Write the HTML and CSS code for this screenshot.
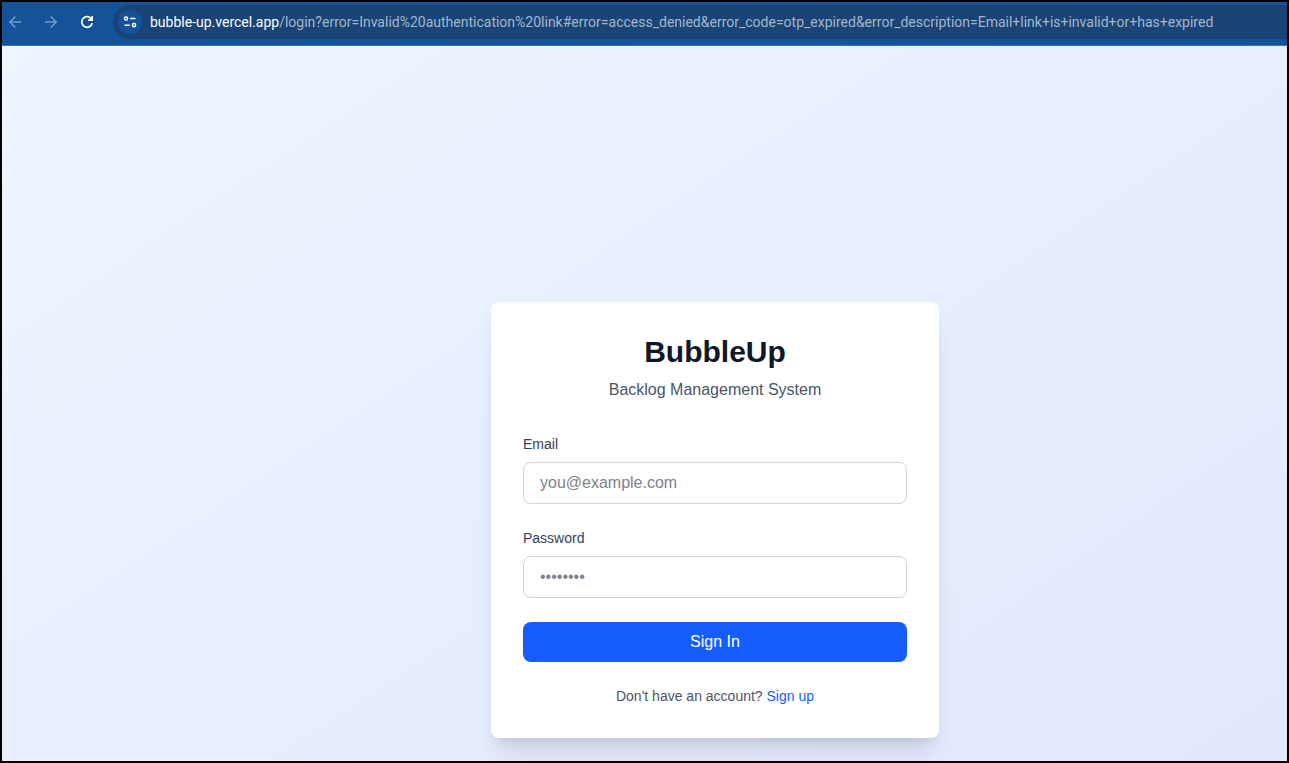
FILE: index.html
```html
<!DOCTYPE html>
<html lang="en">
<head>
<meta charset="utf-8">
<meta name="viewport" content="width=device-width, initial-scale=1">
<title>BubbleUp</title>
<link rel="stylesheet" href="styles.css">
</head>
<body class="window">
<header class="toolbar">
  <nav class="toolbar-nav" aria-label="Browser navigation">
    <button class="nav-button nav-button-muted" type="button" aria-label="Back">
      <svg width="14" height="14" viewBox="0 0 14 14" fill="none" stroke="currentColor" stroke-width="1.5"><path d="M13 7H2M7.3 1.5L1.8 7l5.5 5.5"/></svg>
    </button>
    <button class="nav-button nav-button-muted" type="button" aria-label="Forward">
      <svg width="14" height="14" viewBox="0 0 14 14" fill="none" stroke="currentColor" stroke-width="1.5"><path d="M1 7h11M6.700 1.500L12.200 7l-5.500 5.500"/></svg>
    </button>
    <button class="nav-button" type="button" aria-label="Reload">
      <svg width="14" height="14" viewBox="0 0 14 14" fill="none" stroke="currentColor" stroke-width="1.700"><path d="M12.200 8.300A5.300 5.300 0 1 1 10.900 3.300L12 4.500"/><path d="M12.200 1v4.200H8"/></svg>
    </button>
  </nav>
  <div class="address">
    <button class="site-info" type="button" aria-label="View site information">
      <svg width="14" height="14" viewBox="0 0 14 14" fill="none" stroke="currentColor" stroke-width="1.500"><circle cx="3" cy="3.500" r="1.600"/><path d="M7.200 3.500H12.500M1.500 10.200H6.800"/><circle cx="11" cy="10.200" r="1.600"/></svg>
    </button>
    <span class="url"><span class="url-host">bubble-up.vercel.app</span>/login?error=Invalid%20authentication%20link#error=access_denied&amp;error_code=otp_expired&amp;error_description=Email+link+is+invalid+or+has+expired</span>
  </div>
</header>
<main class="page">
  <section class="card">
    <header class="card-header">
      <h1 class="title">BubbleUp</h1>
      <p class="subtitle">Backlog Management System</p>
    </header>
    <form class="form">
      <div class="field">
        <label class="label" for="email">Email</label>
        <input class="input" id="email" type="email" placeholder="you@example.com">
      </div>
      <div class="field">
        <label class="label" for="password">Password</label>
        <input class="input" id="password" type="password" placeholder="••••••••">
      </div>
      <button class="submit" type="submit">Sign In</button>
    </form>
    <p class="signup">Don't have an account? <a class="link" href="#signup">Sign up</a></p>
  </section>
</main>
</body>
</html>
```
FILE: styles.css
```css
* {
  box-sizing: border-box;
  margin: 0;
}

.window {
  display: flex;
  flex-direction: column;
  height: 100vh;
  overflow: hidden;
  border: 2px solid #000;
  font: 16px/24px "Liberation Sans", Arial, sans-serif;
}

.toolbar {
  display: flex;
  flex: none;
  align-items: center;
  gap: 15px;
  height: 44px;
  padding-bottom: 3px;
  border-bottom: 1px solid #3e76b5;
  background: #14539a;
}

.toolbar-nav {
  display: flex;
  gap: 14px;
  padding-left: 2px;
}

.nav-button {
  display: grid;
  place-items: center;
  width: 22px;
  height: 22px;
  padding: 0;
  border: 0;
  background: none;
  color: #fff;
}

.nav-button-muted {
  color: #6f9ac8;
}

.address {
  display: flex;
  flex: 1;
  align-items: center;
  gap: 8px;
  min-width: 0;
  height: 34px;
  padding-left: 5px;
  border-radius: 17px 0 0 17px;
  background: #194475;
}

.site-info {
  display: grid;
  flex: none;
  place-items: center;
  width: 24px;
  height: 24px;
  padding: 0;
  border: 0;
  border-radius: 50%;
  background: #14539a;
  color: #fff;
}

.url {
  overflow: hidden;
  color: #a3b6cc;
  font: 14px/20px Roboto, "Noto Sans", sans-serif;
  white-space: nowrap;
}

.url-host {
  color: #fff;
}

.page {
  display: flex;
  flex: 1;
  align-items: flex-start;
  justify-content: center;
  min-height: 0;
  padding: 256px 0 0 141px;
  background: linear-gradient(to bottom right, #edf5ff, #dfe6fd) 0 0 / 1426px 948px;
}

.card {
  width: 100%;
  max-width: 448px;
  padding: 32px;
  border-radius: 8px;
  background: #fff;
  box-shadow: 0 20px 25px -5px rgb(0 0 0 / 10%), 0 8px 10px -6px rgb(0 0 0 / 10%);
}

.card-header {
  margin-bottom: 32px;
  text-align: center;
}

.title {
  margin-bottom: 8px;
  color: #101828;
  font-size: 30px;
  line-height: 36px;
}

.subtitle {
  color: #4a5565;
}

.form {
  display: grid;
  gap: 24px;
}

.field {
  display: grid;
  gap: 8px;
}

.label {
  color: #364153;
  font-size: 14px;
  line-height: 20px;
}

.input {
  width: 100%;
  height: 42px;
  padding: 8px 16px;
  border: 1px solid #d1d5dc;
  border-radius: 8px;
  background: #fff;
  color: #101828;
  font: inherit;
}

.input::placeholder {
  color: #808289;
}

.submit {
  height: 40px;
  border: 0;
  border-radius: 8px;
  background: #155dfc;
  color: #fff;
  font: inherit;
}

.signup {
  margin-top: 24px;
  color: #4a5565;
  font-size: 14px;
  line-height: 20px;
  text-align: center;
}

.link {
  color: #155dfc;
  text-decoration: none;
}
```
